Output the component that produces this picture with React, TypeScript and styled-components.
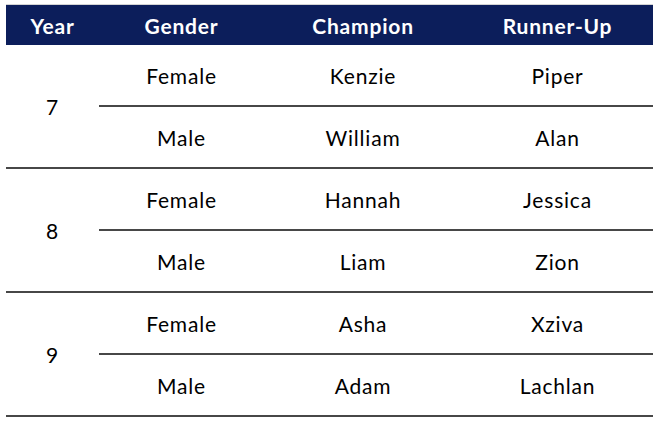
import React from 'react';
import styled, {createGlobalStyle} from 'styled-components';

interface Result {
  gender: string;
  champion: string;
  runnerUp: string;
}

interface YearGroup {
  year: number;
  results: Result[];
}

const groups: YearGroup[] = [
  {
    year: 7,
    results: [
      {gender: 'Female', champion: 'Kenzie', runnerUp: 'Piper'},
      {gender: 'Male', champion: 'William', runnerUp: 'Alan'},
    ],
  },
  {
    year: 8,
    results: [
      {gender: 'Female', champion: 'Hannah', runnerUp: 'Jessica'},
      {gender: 'Male', champion: 'Liam', runnerUp: 'Zion'},
    ],
  },
  {
    year: 9,
    results: [
      {gender: 'Female', champion: 'Asha', runnerUp: 'Xziva'},
      {gender: 'Male', champion: 'Adam', runnerUp: 'Lachlan'},
    ],
  },
];

const App = () => {
  return (
    <>
      <GlobalStyle />
      <Page>
        <ResultsTable>
          <colgroup>
            <col style={{width: 93}} />
            <col style={{width: 165}} />
            <col style={{width: 198}} />
            <col style={{width: 191}} />
          </colgroup>
          <thead>
            <tr>
              <HeaderCell>Year</HeaderCell>
              <HeaderCell>Gender</HeaderCell>
              <HeaderCell>Champion</HeaderCell>
              <HeaderCell>Runner-Up</HeaderCell>
            </tr>
          </thead>
          <tbody>
            {groups.map(group =>
              group.results.map((result, index) => (
                <tr key={`${group.year}-${result.gender}`}>
                  {index === 0 && <Cell rowSpan={group.results.length}>{group.year}</Cell>}
                  <Cell>{result.gender}</Cell>
                  <Cell>{result.champion}</Cell>
                  <Cell>{result.runnerUp}</Cell>
                </tr>
              ))
            )}
          </tbody>
        </ResultsTable>
      </Page>
    </>
  );
};

const GlobalStyle = createGlobalStyle`
  body {
    margin: 0;
    background: #ffffff;
    font-family: Lato, "Liberation Sans", sans-serif;
  }
`;

const Page = styled.div`
  padding: 4px 0 0 6px;
`;

const ResultsTable = styled.table`
  width: 647px;
  border-collapse: collapse;
  table-layout: fixed;
  border-top: 1px solid #d4d4d4;
`;

const HeaderCell = styled.th`
  height: 40px;
  padding: 0;
  background: #0c1e5b;
  color: #ffffff;
  font-size: 21px;
  font-weight: 700;
  letter-spacing: 0.8px;
  text-align: center;
  vertical-align: middle;
`;

const Cell = styled.td`
  height: 60px;
  padding: 0;
  border-bottom: 2px solid #474747;
  color: #000000;
  font-size: 21px;
  letter-spacing: 0.8px;
  text-align: center;
  vertical-align: middle;
`;

export default App;
